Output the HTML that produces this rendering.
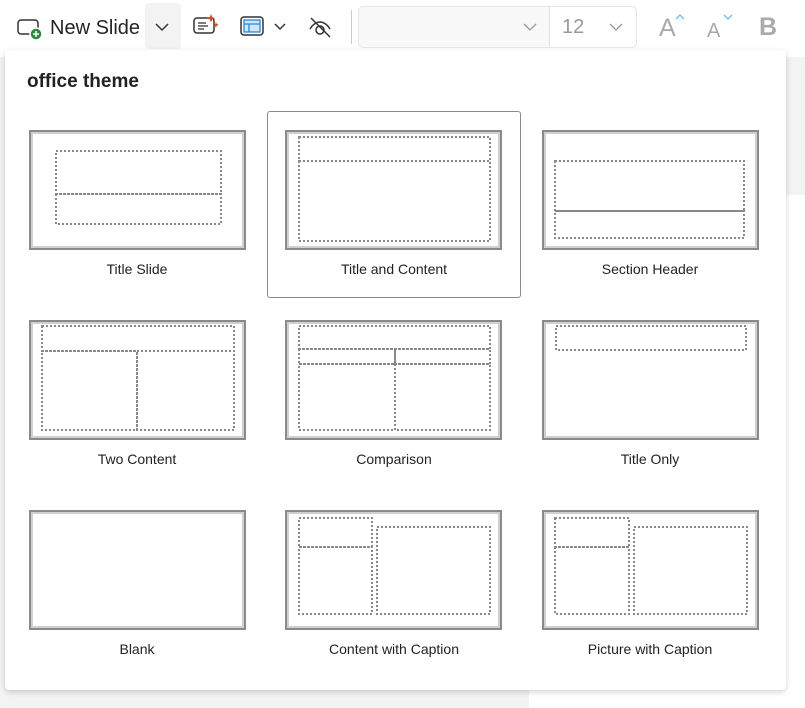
<!DOCTYPE html>
<html><head><style>
body{margin:0;width:805px;height:708px;position:relative;overflow:hidden;background:#fff;font-family:"Segoe UI","Liberation Sans",sans-serif;}
.bg1{position:absolute;left:0;top:57px;width:529px;height:651px;background:#f3f3f3}
.bg2{position:absolute;left:786px;top:57px;width:19px;height:138px;background:#f3f3f3}
.panel{position:absolute;left:5px;top:50px;width:781px;height:640px;background:#fff;border-radius:4px;box-shadow:0 2px 6px rgba(0,0,0,.18)}
.t{position:absolute;font-size:14px;color:#222;text-align:center;width:240px}
.sel{position:absolute;left:267px;top:111px;width:252px;height:185px;border:1px solid #8a8a8a;border-radius:3px}
.tb{position:absolute;color:#242424}
</style></head><body>
<div class="bg1"></div><div class="bg2"></div>
<svg class="tb" style="left:16px;top:16px" width="28" height="26" viewBox="0 0 28 26"><rect x="2" y="4" width="20" height="14" rx="3" fill="none" stroke="#333" stroke-width="1.5"/><circle cx="20" cy="18" r="6" fill="#2e8b3e" stroke="#fff" stroke-width="1.5"/><path d="M20 15v6M17 18h6" stroke="#fff" stroke-width="1.5"/></svg>
<div class="tb" style="left:50px;top:17px;font-size:20px;font-family:'Liberation Sans',sans-serif">New Slide</div>
<div style="position:absolute;left:145px;top:3px;width:36px;height:46px;background:#f3f3f3;border-radius:4px"></div>
<svg class="tb" style="left:153px;top:21px" width="18" height="12"><path d="M3 3l6 6 6-6" fill="none" stroke="#333" stroke-width="1.5"/></svg>
<svg class="tb" style="left:192px;top:13px" width="30" height="26"><rect x="2" y="5" width="20" height="15" rx="3" fill="none" stroke="#333" stroke-width="1.5"/><path d="M6 10h8M6 13h10M6 16h6" stroke="#333" stroke-width="1.3"/><path d="M19 1l1.2 3 3 1.2-3 1.2L19 9.4l-1.2-3-3-1.2 3-1.2z" fill="#d04a1c"/><path d="M24 9l.8 2 2 .8-2 .8L24 15l-.8-2-2-.8 2-.8z" fill="#d04a1c"/></svg>
<svg class="tb" style="left:239px;top:15px" width="52" height="24"><rect x="2" y="2" width="22" height="18" rx="3" fill="none" stroke="#333" stroke-width="1.5"/><rect x="5" y="5" width="16" height="12" fill="#cfe6f7" stroke="#2b88d8" stroke-width="1.3"/><path d="M5 9h16M10 9v8" stroke="#2b88d8" stroke-width="1.3"/><path d="M36 9l5 5 5-5" fill="none" stroke="#333" stroke-width="1.5"/></svg>
<svg class="tb" style="left:307px;top:15px" width="28" height="26"><path d="M3 14c3-5 7-7 10-7s7 2 10 7" fill="none" stroke="#333" stroke-width="1.5"/><circle cx="13" cy="15" r="4" fill="none" stroke="#333" stroke-width="1.5"/><path d="M4 3l19 19" stroke="#333" stroke-width="1.5"/></svg>
<div style="position:absolute;left:351px;top:10px;width:1px;height:34px;background:#ccc"></div>
<div style="position:absolute;left:358px;top:6px;width:277px;height:40px;background:#f8f8f8;border:1px solid #e6e6e6;border-radius:5px"></div>
<div style="position:absolute;left:549px;top:7px;width:86px;height:40px;background:#fff;border-left:1px solid #e6e6e6;border-radius:0 5px 5px 0"></div>
<svg style="position:absolute;left:522px;top:22px" width="16" height="10"><path d="M2 2l6 6 6-6" fill="none" stroke="#999" stroke-width="1.3"/></svg>
<div style="position:absolute;left:562px;top:16px;font-size:20px;color:#999;font-family:'Liberation Sans',sans-serif">12</div>
<svg style="position:absolute;left:608px;top:22px" width="16" height="10"><path d="M2 2l6 6 6-6" fill="none" stroke="#999" stroke-width="1.3"/></svg>
<div style="position:absolute;left:659px;top:14px;font-size:25px;color:#aaa;font-family:'Liberation Sans',sans-serif">A</div>
<svg style="position:absolute;left:674px;top:13px" width="12" height="8"><path d="M2 6l4-4 4 4" fill="none" stroke="#6bbbe8" stroke-width="1.3"/></svg>
<div style="position:absolute;left:707px;top:20px;font-size:20px;color:#aaa;font-family:'Liberation Sans',sans-serif">A</div>
<svg style="position:absolute;left:722px;top:13px" width="12" height="8"><path d="M2 2l4 4 4-4" fill="none" stroke="#6bbbe8" stroke-width="1.3"/></svg>
<div style="position:absolute;left:759px;top:13px;font-size:25px;font-weight:bold;color:#aaa;font-family:'Liberation Sans',sans-serif">B</div>

<div class="panel"></div>
<div style="position:absolute;left:27px;top:71px;font-size:19px;font-weight:bold;color:#222;font-family:'Liberation Sans',sans-serif">office theme</div>
<div class="sel"></div>

<svg width="805" height="708" style="position:absolute;left:0;top:0">
<defs><g id="fr" stroke-dasharray="none"><rect x="1" y="1" width="215" height="118" fill="#fff" stroke="#8a8a8a" stroke-width="2"/><rect x="3" y="3" width="211" height="114" fill="none" stroke="#d0d0d0" stroke-width="2"/></g></defs>
<g fill="none" stroke="#888" stroke-width="2" stroke-dasharray="2 2">
<g transform="translate(29,130)"><use href="#fr"/><rect x="27" y="21" width="165" height="43"/><rect x="27" y="64" width="165" height="30"/></g>
<g transform="translate(285,130)"><use href="#fr"/><rect x="14" y="7" width="191" height="24"/><rect x="14" y="31" width="191" height="80"/></g>
<g transform="translate(542,130)"><use href="#fr"/><rect x="13" y="31" width="189" height="50"/><rect x="13" y="81" width="189" height="27"/></g>
<g transform="translate(29,320)"><use href="#fr"/><rect x="13" y="6" width="192" height="25"/><rect x="13" y="31" width="95" height="79"/><rect x="108" y="31" width="97" height="79"/></g>
<g transform="translate(285,320)"><use href="#fr"/><rect x="14" y="6" width="191" height="23"/><rect x="14" y="29" width="96" height="15"/><rect x="110" y="29" width="95" height="15"/><rect x="14" y="44" width="96" height="66"/><rect x="110" y="44" width="95" height="66"/></g>
<g transform="translate(542,320)"><use href="#fr"/><rect x="14" y="6" width="190" height="24"/></g>
<g transform="translate(29,510)"><use href="#fr"/></g>
<g transform="translate(285,510)"><use href="#fr"/><rect x="14" y="8" width="73" height="29"/><rect x="14" y="37" width="73" height="67"/><rect x="92" y="17" width="113" height="87"/></g>
<g transform="translate(542,510)"><use href="#fr"/><rect x="13" y="8" width="74" height="29"/><rect x="13" y="37" width="74" height="67"/><rect x="92" y="17" width="113" height="87"/></g>
</g></svg>
<div class="t" style="left:17px;top:261px">Title Slide</div>
<div class="t" style="left:274px;top:261px">Title and Content</div>
<div class="t" style="left:530px;top:261px">Section Header</div>
<div class="t" style="left:17px;top:451px">Two Content</div>
<div class="t" style="left:274px;top:451px">Comparison</div>
<div class="t" style="left:530px;top:451px">Title Only</div>
<div class="t" style="left:17px;top:641px">Blank</div>
<div class="t" style="left:274px;top:641px">Content with Caption</div>
<div class="t" style="left:530px;top:641px">Picture with Caption</div>
</body></html>
